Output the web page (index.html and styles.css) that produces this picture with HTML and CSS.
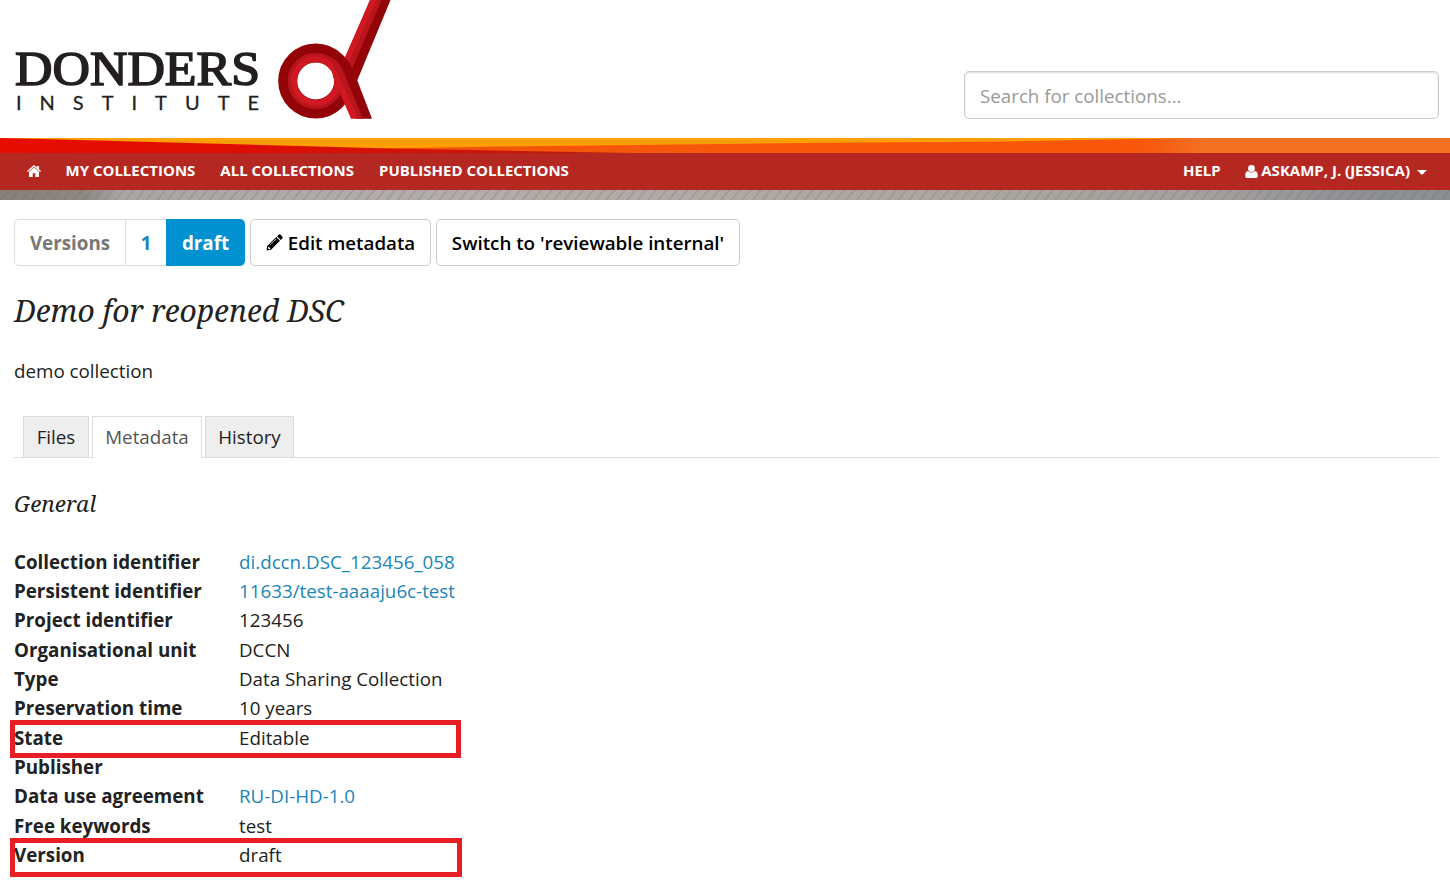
FILE: index.html
```html
<!DOCTYPE html>
<html lang="en">
<head>
<meta charset="utf-8">
<title>Demo for reopened DSC</title>
<link rel="stylesheet" href="styles.css">
</head>
<body>
<header class="header">
  <svg class="logo" width="400" height="138" viewBox="0 0 400 138" role="img" aria-label="Donders Institute">
    <text class="logo-name" x="15" y="85" textLength="245" lengthAdjust="spacingAndGlyphs">DONDERS</text>
    <text class="logo-sub" x="16" y="109.800" textLength="243">INSTITUTE</text>
    <path fill="#920407" d="M370 0H390.500L357 81L346 57Z"/>
    <path fill="#d01822" d="M370 0H377L349 64L345 57Z"/>
    <path fill="#b8151c" d="M376.500 0H381.500L352 69L348.500 63Z"/>
    <circle cx="315.700" cy="81" r="28" fill="none" stroke="#920407" stroke-width="19"/>
    <circle cx="315.700" cy="81" r="25" fill="none" stroke="#b8151c" stroke-width="6"/>
    <circle cx="315.700" cy="81" r="21.700" fill="none" stroke="#d01822" stroke-width="6"/>
    <path fill="#920407" d="M341 53.500Q347 58 351 66L357.500 81L372 118.700H358L337 70Z"/>
    <path fill="#b8151c" d="M333 58Q340 63 343.500 72L363 118.700H356L333 75Z"/>
    <path fill="#d01822" d="M331 65Q336 69 339 76L358 118.700H351L333 77Z"/>
  </svg>
  <input class="search" type="text" placeholder="Search for collections...">
</header>
<svg class="band" width="1450" height="15" viewBox="0 0 1450 15">
  <defs>
    <linearGradient id="red"><stop offset="0" stop-color="#e60c00"/><stop offset=".45" stop-color="#dc0f02"/><stop offset="1" stop-color="#c01a10"/></linearGradient>
    <linearGradient id="orange" gradientUnits="userSpaceOnUse" x1="380" y1="0" x2="1450" y2="0"><stop offset="0" stop-color="#ee5608"/><stop offset=".3" stop-color="#f8570a"/><stop offset=".71" stop-color="#f8560a"/><stop offset=".77" stop-color="#f47022"/><stop offset="1" stop-color="#f47022"/></linearGradient>
  </defs>
  <rect width="1450" height="15" fill="#ff9e05"/>
  <path fill="url(#orange)" d="M350 11L500 8.500L800 5L1000 3.500L1190 0H1450V15H350Z"/>
  <path fill="url(#red)" d="M0 0L60 1.500L390 10.500L500 12.500L630 15H0Z"/>
</svg>
<nav class="nav">
  <a class="home"><svg width="14" height="12" viewBox="0 0 14 12"><path fill="#fff" d="M7 0L10 2.600V1H12V4.300L14 6L13.200 7L7 1.700L.800 7L0 6ZM7 2.500L12 6.800V12H8.300V8.200H5.700V12H2V6.800Z"/></svg></a>
  <a class="mine">MY COLLECTIONS</a>
  <a class="all">ALL COLLECTIONS</a>
  <a class="published">PUBLISHED COLLECTIONS</a>
  <a class="help">HELP</a>
  <a class="user"><svg width="13" height="13" viewBox="0 0 13 13"><circle cx="6.500" cy="3.500" r="3.400" fill="#fff"/><path fill="#fff" d="M3 6Q6.500 9 10 6Q12.800 6.500 12.800 11Q12.800 13 11 13H2Q.200 13 .200 11Q.200 6.500 3 6Z"/></svg><span>ASKAMP, J. (JESSICA)</span><i class="caret"></i></a>
</nav>
<div class="texture"></div>
<main class="main">
  <div class="toolbar">
    <div class="versions"><span class="v-label">Versions</span><a class="v-one">1</a><a class="v-draft">draft</a></div>
    <button class="button edit"><svg width="17" height="17" viewBox="0 0 17 17"><path fill="#000" fill-rule="evenodd" d="M11 2.200L12.600 .700Q13.600 0 14.600 .800L16.300 2.500Q17 3.500 16.300 4.400L14.800 6ZM10.200 3L14 6.800L5 15.800L.500 16.600L1.200 12ZM2.300 12.800L2 14.300L2.900 15.200L4.300 14.900V13.700H3.300V12.700ZM4 11.300L10.400 4.900L10 4.500L3.600 10.900Z"/></svg><span>Edit metadata</span></button>
    <button class="button switch">Switch to 'reviewable internal'</button>
  </div>
  <h1 class="title">Demo for reopened DSC</h1>
  <p class="description">demo collection</p>
  <div class="tabs"><a class="tab files">Files</a><a class="tab active">Metadata</a><a class="tab history">History</a></div>
  <h2 class="section">General</h2>
  <dl class="details">
    <div class="row"><dt>Collection identifier</dt><dd><a>di.dccn.DSC_123456_058</a></dd></div>
    <div class="row"><dt>Persistent identifier</dt><dd><a>11633/test-aaaaju6c-test</a></dd></div>
    <div class="row"><dt>Project identifier</dt><dd>123456</dd></div>
    <div class="row"><dt>Organisational unit</dt><dd>DCCN</dd></div>
    <div class="row"><dt>Type</dt><dd>Data Sharing Collection</dd></div>
    <div class="row"><dt>Preservation time</dt><dd>10 years</dd></div>
    <div class="row marked state"><dt>State</dt><dd>Editable</dd></div>
    <div class="row"><dt>Publisher</dt><dd></dd></div>
    <div class="row"><dt>Data use agreement</dt><dd><a>RU-DI-HD-1.0</a></dd></div>
    <div class="row"><dt>Free keywords</dt><dd>test</dd></div>
    <div class="row marked version"><dt>Version</dt><dd>draft</dd></div>
  </dl>
</main>
</body>
</html>
```
FILE: styles.css
```css
*, *::after { box-sizing: border-box; }
body { margin: 0; height: 882px; overflow: hidden; background: #fff; color: #222; font: 18.77px/29.37px "Open Sans", sans-serif; }
svg { display: block; flex: none; }
.header { display: flex; justify-content: space-between; height: 138px; }
.logo-name { font: 47.5px "Liberation Serif", serif; fill: #231f20; stroke: #231f20; stroke-width: 1.6px; }
.logo-sub { font: 20px Lato, sans-serif; fill: #231f20; stroke: #231f20; stroke-width: .3px; }
.search { width: 475px; height: 48px; margin: 71px 11px 0 0; padding: 0 15px; border: 1px solid #ccc; border-radius: 5px; box-shadow: inset 0 1px 2px #0002; font: 18.75px "Open Sans", sans-serif; }
.search::placeholder { color: #999; opacity: 1; }
.nav { display: flex; align-items: center; height: 37px; padding: 0 23px 1px 26.5px; background: #b52822; color: #fff; font-size: 15px; font-weight: 700; white-space: nowrap; }
.home { margin-right: 25px; }
.mine, .all { margin-right: 25px; }
.help { margin-left: auto; margin-right: 24.5px; }
.user { display: flex; align-items: center; gap: 3px; }
.caret { margin: 3px 0 0 4px; border: 5px solid transparent; border-top-color: #fff; border-bottom: 0; }
.texture { height: 10px; background: repeating-linear-gradient(130deg, #0000 0 5.5px, #6b696333 6px 7.5px, #0000 8px), linear-gradient(90deg, #858078, #8c8780 85px, #aaa5a5 120px, #b3adaa 450px, #aba5a0 1000px, #a5a09d 1200px, #8e9096 1370px, #8b8d92); }
.main { padding: 19px 11px 0 14px; }
.toolbar { display: flex; gap: 5px; height: 47px; }
.versions { display: flex; width: 231px; font-weight: 700; line-height: 45px; text-align: center; }
.v-label { width: 111px; border: 1px solid #ddd; border-right: 0; border-radius: 5px 0 0 5px; color: #777; }
.v-one { width: 41px; border: 1px solid #ddd; border-right: 0; color: #2086b8; }
.v-draft { flex: 1; line-height: 47px; background: #0092d0; border-radius: 0 5px 5px 0; color: #fff; }
.button { display: flex; align-items: center; justify-content: center; gap: 5px; padding: 0 0 1px; border: 1px solid #ccc; border-radius: 5px; background: #fff; color: #000; font: 600 18.75px "Open Sans", sans-serif; white-space: nowrap; }
.edit { width: 181px; }
.switch { width: 304px; }
.title { margin: 25px 0 0; font: italic 30.05px/40px "Noto Serif", "Droid Serif", "DejaVu Serif Condensed", serif; }
.description { margin: 25px 0 0; }
.tabs { display: flex; gap: 3px; height: 42px; margin-top: 31px; padding-left: 9px; border-bottom: 1px solid #ddd; text-align: center; line-height: 40px; }
.tab { height: 41px; border: 1px solid #ddd; border-bottom: 0; background: #eee; }
.files { width: 66px; }
.active { width: 110px; height: 42px; background: #fff; color: #555; }
.history { width: 89px; }
.section { margin: 29px 0 0; font: italic 22.6px/33px "Noto Serif", "Droid Serif", "DejaVu Serif Condensed", serif; }
.details { margin: 26.2px 0 0; }
.row { position: relative; display: flex; height: 29.37px; white-space: nowrap; }
dt { width: 225px; font-weight: 700; }
dd { margin: 0; }
dd a { color: #2086b8; }
.marked::after { content: ""; position: absolute; left: -4px; border: 5px solid #e81e25; }
.state::after { top: -3px; width: 451px; height: 38px; }
.version::after { top: -2.3px; width: 452px; height: 39px; }
```
